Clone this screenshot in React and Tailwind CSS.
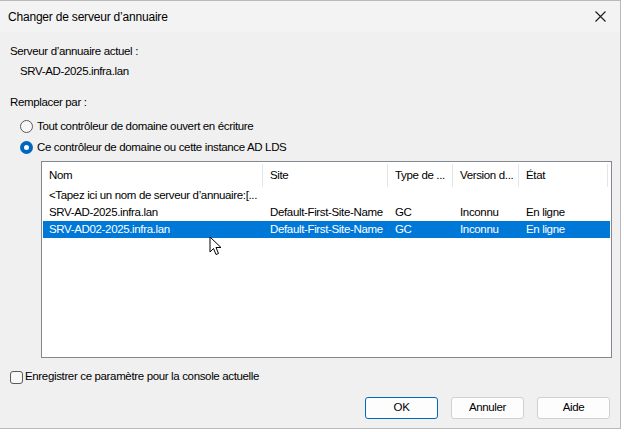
import React from "react";

const cols = [
  { label: "Nom", w: "w-[221px]" },
  { label: "Site", w: "w-[125px]" },
  { label: "Type de ...", w: "w-[65px]" },
  { label: "Version d...", w: "w-[66px]" },
  { label: "État", w: "w-[89px]" },
];

const rows = [
  { cells: ["<Tapez ici un nom de serveur d’annuaire:[...", "", "", "", ""] },
  { cells: ["SRV-AD-2025.infra.lan", "Default-First-Site-Name", "GC", "Inconnu", "En ligne"] },
  { cells: ["SRV-AD02-2025.infra.lan", "Default-First-Site-Name", "GC", "Inconnu", "En ligne"], selected: true },
];

function Radio({ checked }) {
  return checked ? (
    <span className="w-[13px] h-[13px] rounded-full bg-[#0067c0] flex items-center justify-center">
      <span className="w-[5px] h-[5px] rounded-full bg-white"></span>
    </span>
  ) : (
    <span className="w-[13px] h-[13px] rounded-full border border-[#5a5a5a] bg-[#f7f7f7]"></span>
  );
}

function Button({ children, primary }) {
  return (
    <button
      className={
        "w-[73px] h-[22px] rounded-[3px] bg-[#fdfdfd] text-black " +
        (primary ? "border border-[#0067c0]" : "border border-[#d0d0d0]")
      }
    >
      {children}
    </button>
  );
}

export default function App() {
  return (
    <div
      className="relative w-[624px] h-[432px] bg-white overflow-hidden text-[11.5px] tracking-[-0.35px] text-black"
      style={{ fontFamily: '"Liberation Sans", Arial, sans-serif' }}
    >
      <div className="w-[621px] h-[429px] border-t border-r border-b border-[#b9b9b9] bg-[#f0f0f0] flex flex-col">
        {/* Title bar */}
        <div className="h-[31px] bg-[#f3f3f3] flex items-center justify-between pl-[8px] pr-[14px]">
          <span className="text-[12px] tracking-[-0.2px]">Changer de serveur d’annuaire</span>
          <svg width="11" height="11" viewBox="0 0 11 11">
            <path d="M0.5 0.5L10.5 10.5M10.5 0.5L0.5 10.5" stroke="#1a1a1a" strokeWidth="1.1" />
          </svg>
        </div>

        {/* Body */}
        <div className="flex flex-col pl-[10px] pt-[12px]">
          <div className="leading-[15px]">Serveur d’annuaire actuel :</div>
          <div className="leading-[15px] pl-[10px] mt-[5px]">SRV-AD-2025.infra.lan</div>
          <div className="leading-[15px] mt-[16px]">Remplacer par :</div>

          <div className="flex items-center gap-[4px] pl-[10px] mt-[9px] h-[15px]">
            <Radio />
            <span>Tout contrôleur de domaine ouvert en écriture</span>
          </div>
          <div className="flex items-center gap-[4px] pl-[10px] mt-[6px] h-[15px]">
            <Radio checked />
            <span>Ce contrôleur de domaine ou cette instance AD LDS</span>
          </div>

          {/* List */}
          <div className="ml-[31px] mt-[6px] w-[571px] h-[197px] border border-[#828790] bg-white">
            <div className="flex h-[25px] pt-[2px]">
              {cols.map((c) => (
                <div key={c.label} className={c.w + " flex items-center pl-[7px] border-r border-[#e5e5e5] whitespace-nowrap"}>
                  {c.label}
                </div>
              ))}
            </div>
            <div className="flex flex-col px-[1px]">
              {rows.map((r, i) => (
                <div
                  key={i}
                  className={"flex h-[17px] items-center " + (r.selected ? "bg-[#0078d7] text-white" : "")}
                >
                  {r.cells.map((cell, j) => (
                    <div key={j} className={cols[j].w + " pl-[6px] whitespace-nowrap overflow-visible"}>
                      {cell}
                    </div>
                  ))}
                </div>
              ))}
            </div>
          </div>

          {/* Checkbox */}
          <div className="flex items-center gap-[2px] mt-[12px] h-[14px]">
            <span className="w-[13px] h-[13px] rounded-[3px] border border-[#5a5a5a] bg-[#f7f7f7]"></span>
            <span>Enregistrer ce paramètre pour la console actuelle</span>
          </div>

          {/* Buttons */}
          <div className="flex justify-end gap-[13px] pr-[10px] mt-[13px]">
            <Button primary>OK</Button>
            <Button>Annuler</Button>
            <Button>Aide</Button>
          </div>
        </div>
      </div>

      {/* Mouse cursor */}
      <svg className="absolute left-[209px] top-[236px]" width="14" height="20" viewBox="0 0 14 20">
        <path d="M1 1V16L4.5 12.5L7 18.5L9.5 17.5L7 11.5H12Z" fill="#fff" stroke="#000" strokeWidth="1" strokeLinejoin="round" />
      </svg>
    </div>
  );
}
